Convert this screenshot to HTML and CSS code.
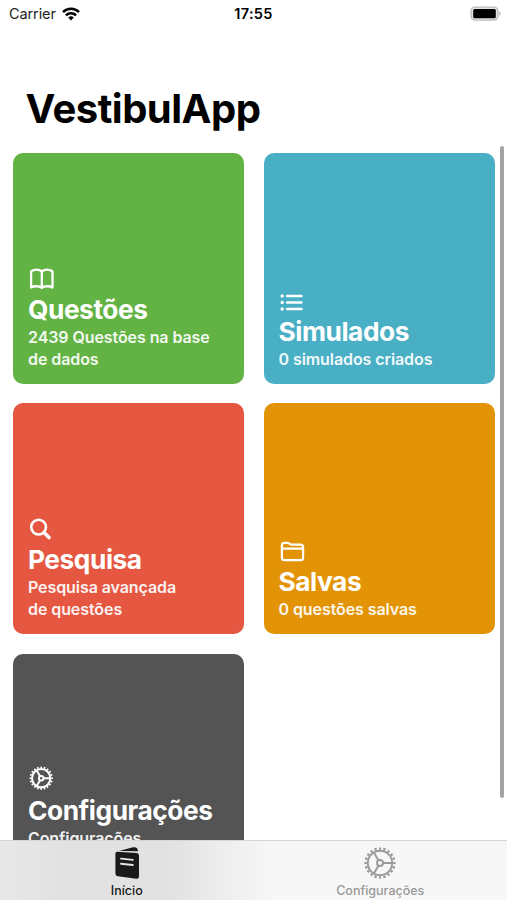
FILE: index.html
```html
<!DOCTYPE html>
<html lang="pt-BR">
<head>
  <meta charset="UTF-8" />
  <meta name="viewport" content="width=device-width, initial-scale=1.0"/>
  <title>VestibulApp</title>
  <link rel="stylesheet" href="styles.css">
</head>
<body>
  <!-- Shared gear icon -->
  <svg class="symbols" width="0" height="0">
    <symbol id="gear" viewBox="0 0 32 32">
      <g fill="none" stroke="currentColor">
        <circle class="gear-teeth" cx="16" cy="16" r="14.4" pathLength="40" stroke-dasharray="1 1" stroke-dashoffset="0.5"/>
        <circle class="gear-line" cx="16" cy="16" r="12.2"/>
        <circle class="gear-line" cx="16" cy="16" r="3"/>
        <path class="gear-line" d="M19 16h9.4M14.5 13.4L9.8 5.3M14.5 18.6l-4.7 8.1"/>
      </g>
    </symbol>
  </svg>

  <div class="screen">
    <header class="status-bar">
      <div class="carrier">
        <span>Carrier</span>
        <svg width="18" height="14" viewBox="0 0 18 14" fill="none" stroke="#000" stroke-width="2.5">
          <path d="M1 5.1a11.4 11.4 0 0 1 16 0"/>
          <path d="M3.9 8.3a7.3 7.3 0 0 1 10.2 0"/>
          <path d="M9 13.5L6.2 10.6a4 4 0 0 1 5.6 0z" fill="#000" stroke="none"/>
        </svg>
      </div>
      <div class="time">17:55</div>
      <div class="battery">
        <svg width="32" height="16" viewBox="0 0 32 16">
          <rect x="2.1" y="1.1" width="26.8" height="13" rx="4" fill="#e4e4e4" stroke="#bdbdbd" stroke-width="1.4"/>
          <rect x="4.2" y="3" width="22.6" height="9.2" rx="1.5" fill="#000"/>
          <path d="M30.2 5.3q1.6.7 1.6 2.3t-1.6 2.3z" fill="#b9b9b9"/>
        </svg>
      </div>
    </header>

    <h1>VestibulApp</h1>

    <main class="card-container">
      <div class="card questoes">
        <svg class="icon" width="26" height="22" viewBox="0 0 26 22" fill="none" stroke="currentColor" stroke-width="2.3" stroke-linejoin="round" stroke-linecap="round">
          <path d="M13.800 3.400C11.300 .9 6 .9 3.100 3.400V19.500C6 17.800 11.300 17.800 13.800 19.800C16.400 17.800 21.600 17.800 24.500 19.500V3.400C21.600 .9 16.400 .9 13.800 3.400V19.800"/>
        </svg>
        <h2>Questões</h2>
        <p>2439 Questões na base<br>de dados</p>
      </div>
      <div class="card simulados">
        <svg class="icon" width="26" height="20" viewBox="0 0 26 20" fill="none" stroke="currentColor" stroke-width="2.4" stroke-linecap="round">
          <path d="M8.100 4h14.400M8.100 10.500h14.400M8.100 17h14.400"/>
          <path stroke-width="3.5" d="M3.200 4h.01M3.200 10.500h.01M3.200 17h.01"/>
        </svg>
        <h2>Simulados</h2>
        <p>0 simulados criados</p>
      </div>
      <div class="card pesquisa">
        <svg class="icon" width="26" height="23" viewBox="0 0 26 23" fill="none" stroke="currentColor" stroke-linecap="round">
          <circle cx="10.600" cy="10.100" r="7.400" stroke-width="2.600"/>
          <path stroke-width="3.500" d="M16 15.600l5 5"/>
        </svg>
        <h2>Pesquisa</h2>
        <p>Pesquisa avançada<br>de questões</p>
      </div>
      <div class="card salvas">
        <svg class="icon" width="26" height="22" viewBox="0 0 26 22" fill="none" stroke="currentColor" stroke-width="2.2" stroke-linejoin="round">
          <path d="M2.900 17.700V5.200q0-2.400 2.400-2.400h3.300q1 0 1.700.7l.7.6q.6.500 1.500.5h9q2.600 0 2.600 2.600V17.700q0 2.500-2.600 2.500H5.500q-2.600 0-2.600-2.500zM2.900 8.700h21.200"/>
        </svg>
        <h2>Salvas</h2>
        <p>0 questões salvas</p>
      </div>
      <div class="card config">
        <svg class="icon gear-small" width="26" height="25" viewBox="0 0 26 25"><use href="#gear" x="1.2" y="0.2" width="24" height="24"/></svg>
        <h2>Configurações</h2>
        <p>Configurações<br>do aplicativo</p>
      </div>
    </main>

    <div class="scroll-indicator"></div>

    <nav class="tab-bar">
      <div class="tab active">
        <svg width="32" height="34" viewBox="0 0 32 34">
          <path fill="currentColor" d="M6 5.600L22 1.300Q26.800 .4 27 5.300L10.700 4.900z"/>
          <path d="M6.500 5.500L28 6.700" stroke="#e2e2e2" stroke-width="1"/>
          <path fill="currentColor" d="M6.300 5.800L25.500 6.900Q28 7.100 28 9.500V30.600Q28 33.200 25.400 32.800L6.900 30.300Q4.400 29.900 4.400 27.400V7.800Q4.400 5.700 6.300 5.800z"/>
          <path d="M10 12.600l11.800 1.300M10 17.700l11.800 1.300" stroke="#e5e5e5" stroke-width="1.900" stroke-linecap="round"/>
        </svg>
        <span>Início</span>
      </div>
      <div class="tab">
        <svg width="32" height="34" viewBox="0 -1 32 34"><use href="#gear" width="32" height="32"/></svg>
        <span>Configurações</span>
      </div>
    </nav>
  </div>
</body>
</html>
```

FILE: styles.css
```css
* {
  margin: 0;
  padding: 0;
  box-sizing: border-box;
}
body {
  font-family: Inter, 'Liberation Sans', sans-serif;
  background: #fff;
  color: #000;
}
.symbols {
  display: block;
}
.screen {
  position: relative;
  height: 900px;
  overflow: hidden;
}
/* Status bar */
.status-bar {
  display: grid;
  grid-template-columns: 1fr auto 1fr;
  align-items: center;
  height: 27px;
  padding: 0 6px;
  font-size: 14.5px;
}
.carrier {
  display: flex;
  align-items: center;
  gap: 6px;
  padding-left: 3px;
  color: #222;
}
.carrier span {
  letter-spacing: -0.1px;
}
.time {
  font-weight: 600;
  letter-spacing: 0.3px;
}
.battery {
  display: flex;
  justify-content: flex-end;
}
h1 {
  height: 125.5px;
  padding: 57px 0 0 25.5px;
  font-size: 40px;
  line-height: 50px;
  font-weight: 700;
  letter-spacing: -0.5px;
}
/* Cards */
.card-container {
  display: grid;
  grid-template-columns: 231px 231px;
  grid-auto-rows: 231px;
  gap: 19.5px;
  padding-left: 13px;
}
.card {
  display: flex;
  flex-direction: column;
  justify-content: flex-end;
  align-items: flex-start;
  padding: 0 15px 13.6px;
  border-radius: 10px;
  color: #fff;
}
.card h2 {
  font-size: 26.3px;
  line-height: 33px;
  font-weight: 700;
  letter-spacing: -0.45px;
}
.card p {
  font-size: 16px;
  line-height: 22px;
  font-weight: 600;
  letter-spacing: -0.08px;
  opacity: 0.92;
  white-space: nowrap;
}
.icon {
  display: block;
  margin-bottom: 3px;
}
.questoes {
  background: #62b344;
}
.simulados {
  background: #49afc5;
}
.pesquisa {
  background: #e55741;
}
.salvas {
  background: #e39406;
}
.config {
  background: #545454;
}
/* Gear */
.gear-teeth {
  stroke-width: 2.4;
}
.gear-line {
  stroke-width: var(--gear-line, 1.9);
}
.gear-small {
  --gear-line: 2.7;
}
.scroll-indicator {
  position: absolute;
  top: 146px;
  right: 3px;
  width: 4px;
  height: 652px;
  border-radius: 2px;
  background: #a3a3a3;
}
/* Tab bar */
.tab-bar {
  position: absolute;
  left: 0;
  right: 0;
  bottom: 0;
  height: 60px;
  display: flex;
  border-top: 1px solid #d6d6d6;
  background: linear-gradient(to right, #e8e8e8, #e2e2e2 60px, #e2e2e2 170px, #eeeeee 225px, #f7f7f7 275px);
}
.tab {
  flex: 1;
  display: flex;
  flex-direction: column;
  align-items: center;
  padding-top: 5px;
  color: #999;
  font-size: 12.5px;
  line-height: 15px;
  font-weight: 500;
}
.tab span {
  margin-top: 3px;
}
.tab.active {
  color: #1a1a1a;
}
```
